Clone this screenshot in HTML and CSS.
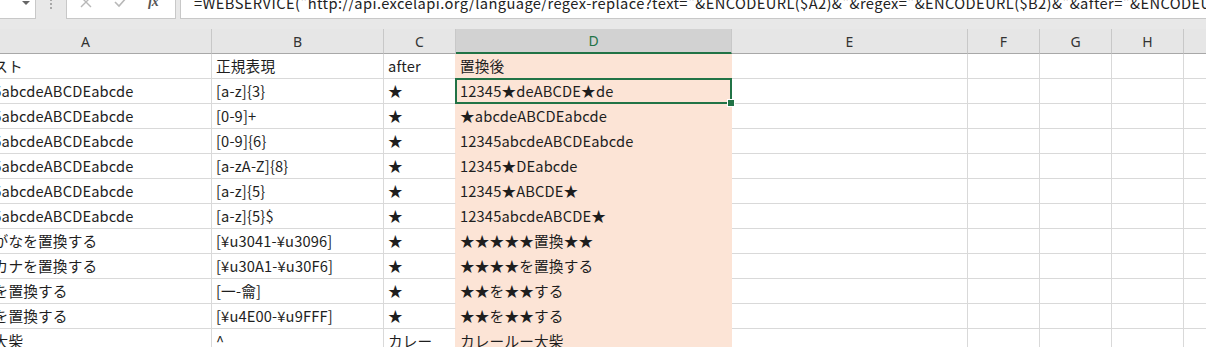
FILE: index.html
```html
<!DOCTYPE html>
<html lang="ja">
<head>
<meta charset="utf-8">
<title>regex-replace</title>
<link rel="stylesheet" href="styles.css">
</head>
<body>
<div class="toolbar">
  <div class="namebox"><span class="dd"></span></div>
  <div class="grip"><span></span><span></span><span></span></div>
  <div class="btnbox">
    <svg class="ico x" width="12" height="12" viewBox="0 0 12 12"><path d="M1 1L11 11M11 1L1 11" stroke="#b8b8b8" stroke-width="1.4" fill="none"/></svg>
    <svg class="ico ok" width="14" height="12" viewBox="0 0 14 12"><path d="M1 6L5 10L13 1" stroke="#b8b8b8" stroke-width="1.6" fill="none"/></svg>
    <span class="fx">fx</span>
  </div>
  <div class="formula">=WEBSERVICE("http://api.excelapi.org/language/regex-replace?text="&amp;ENCODEURL($A2)&amp;"&amp;regex="&amp;ENCODEURL($B2)&amp;"&amp;after="&amp;ENCODEURL($C2))</div>
</div>
<div class="sheet">
  <div class="hd">A</div><div class="hd">B</div><div class="hd">C</div><div class="hd sel">D</div><div class="hd">E</div><div class="hd">F</div><div class="hd">G</div><div class="hd">H</div><div class="hd last"></div>

  <div class="c">テキスト</div><div class="c">正規表現</div><div class="c cc">after</div><div class="c d">置換後</div><div class="c"></div><div class="c"></div><div class="c"></div><div class="c"></div><div class="c last"></div>

  <div class="c lat">12345abcdeABCDEabcde</div><div class="c">[a-z]{3}</div><div class="c cc">★</div><div class="c d active">12345★deABCDE★de</div><div class="c"></div><div class="c"></div><div class="c"></div><div class="c"></div><div class="c last"></div>

  <div class="c lat">12345abcdeABCDEabcde</div><div class="c">[0-9]+</div><div class="c cc">★</div><div class="c d">★abcdeABCDEabcde</div><div class="c"></div><div class="c"></div><div class="c"></div><div class="c"></div><div class="c last"></div>

  <div class="c lat">12345abcdeABCDEabcde</div><div class="c">[0-9]{6}</div><div class="c cc">★</div><div class="c d">12345abcdeABCDEabcde</div><div class="c"></div><div class="c"></div><div class="c"></div><div class="c"></div><div class="c last"></div>

  <div class="c lat">12345abcdeABCDEabcde</div><div class="c">[a-zA-Z]{8}</div><div class="c cc">★</div><div class="c d">12345★DEabcde</div><div class="c"></div><div class="c"></div><div class="c"></div><div class="c"></div><div class="c last"></div>

  <div class="c lat">12345abcdeABCDEabcde</div><div class="c">[a-z]{5}</div><div class="c cc">★</div><div class="c d">12345★ABCDE★</div><div class="c"></div><div class="c"></div><div class="c"></div><div class="c"></div><div class="c last"></div>

  <div class="c lat">12345abcdeABCDEabcde</div><div class="c">[a-z]{5}$</div><div class="c cc">★</div><div class="c d">12345abcdeABCDE★</div><div class="c"></div><div class="c"></div><div class="c"></div><div class="c"></div><div class="c last"></div>

  <div class="c">ひらがなを置換する</div><div class="c">[¥u3041-¥u3096]</div><div class="c cc">★</div><div class="c d">★★★★★置換★★</div><div class="c"></div><div class="c"></div><div class="c"></div><div class="c"></div><div class="c last"></div>

  <div class="c">カタカナを置換する</div><div class="c">[¥u30A1-¥u30F6]</div><div class="c cc">★</div><div class="c d">★★★★を置換する</div><div class="c"></div><div class="c"></div><div class="c"></div><div class="c"></div><div class="c last"></div>

  <div class="c">漢字を置換する</div><div class="c">[一-龠]</div><div class="c cc">★</div><div class="c d">★★を★★する</div><div class="c"></div><div class="c"></div><div class="c"></div><div class="c"></div><div class="c last"></div>

  <div class="c">漢字を置換する</div><div class="c">[¥u4E00-¥u9FFF]</div><div class="c cc">★</div><div class="c d">★★を★★する</div><div class="c"></div><div class="c"></div><div class="c"></div><div class="c"></div><div class="c last"></div>

  <div class="c">ルー大柴</div><div class="c">^</div><div class="c cc">カレー</div><div class="c d">カレールー大柴</div><div class="c"></div><div class="c"></div><div class="c"></div><div class="c"></div><div class="c last"></div>
</div>
</body>
</html>
```
FILE: styles.css
```css
html, body {
  margin: 0;
  padding: 0;
}
body {
  width: 1206px;
  height: 347px;
  overflow: hidden;
  background: #ffffff;
  font-family: "Noto Sans CJK JP", "Noto Sans", sans-serif;
  font-size: 14.67px;
  color: #1e1e1e;
}
.toolbar {
  height: 29px;
  background: #e8e8e8;
  display: flex;
  align-items: flex-start;
  overflow: hidden;
}
.namebox, .btnbox, .formula {
  box-sizing: border-box;
  height: 27px;
  margin-top: -8px;
  background: #fff;
  border: 1px solid #c8c8c8;
}
.namebox {
  width: 37px;
  margin-left: -1px;
  position: relative;
}
.dd {
  position: absolute;
  left: 22px;
  top: 8px;
  width: 0;
  height: 0;
  border-left: 4px solid transparent;
  border-right: 4px solid transparent;
  border-top: 4px solid #666;
}
.grip {
  width: 30px;
  display: flex;
  flex-direction: column;
  align-items: center;
  gap: 2px;
  margin-top: -1px;
}
.grip span {
  width: 2px;
  height: 2px;
  background: #a8a8a8;
}
.btnbox {
  width: 110px;
  display: flex;
  align-items: center;
  padding-bottom: 7px;
}
.ico {
  display: block;
}
.ico.x {
  margin-left: 13px;
}
.ico.ok {
  margin-left: 22px;
}
.fx {
  margin-left: 20px;
  font-family: "Liberation Serif", "DejaVu Serif", serif;
  font-style: italic;
  font-weight: bold;
  font-size: 14px;
  line-height: 14px;
  color: #555;
  letter-spacing: -1px;
}
.formula {
  flex: 1;
  margin-left: 4px;
  margin-right: -2px;
  padding-left: 13px;
  line-height: 20px;
  white-space: nowrap;
  overflow: hidden;
  color: #222;
  letter-spacing: 0.4px;
}
.sheet {
  display: grid;
  grid-template-columns: 252px 172px 72px 276px 236px 72px 72px 72px 100px;
  grid-auto-rows: 25px;
  margin-left: -40px;
}
.hd {
  box-sizing: border-box;
  height: 25px;
  background: #e6e6e6;
  border-right: 1px solid #c8c8c8;
  border-bottom: 1px solid #a8a8a8;
  display: flex;
  align-items: center;
  justify-content: center;
  font-family: "Noto Sans", "Liberation Sans", sans-serif;
  font-size: 14px;
  color: #333;
}
.hd.sel {
  background: #d2d2d2;
  color: #217346;
  border-bottom: 2px solid #217346;
}
.c {
  box-sizing: border-box;
  border-right: 1px solid #d9d9d9;
  border-bottom: 1px solid #d9d9d9;
  padding-left: 4px;
  display: flex;
  align-items: center;
  white-space: nowrap;
  overflow: hidden;
  line-height: 1;
  letter-spacing: 0.15px;
}
.c.lat {
  padding-left: 0;
}
.c.cc {
  border-right-color: #fce4d6;
}
.c.d {
  background: #fce4d6;
  border-right-color: #fce4d6;
  border-bottom-color: #fce4d6;
}
.c.active {
  position: relative;
  overflow: visible;
}
.c.active::after {
  content: "";
  position: absolute;
  left: -1px;
  top: -1px;
  right: -1px;
  bottom: -1px;
  border: 2px solid #217346;
}
.c.active::before {
  content: "";
  position: absolute;
  right: -4px;
  bottom: -4px;
  width: 6px;
  height: 6px;
  background: #217346;
  border: 1px solid #fff;
  z-index: 2;
}
```
